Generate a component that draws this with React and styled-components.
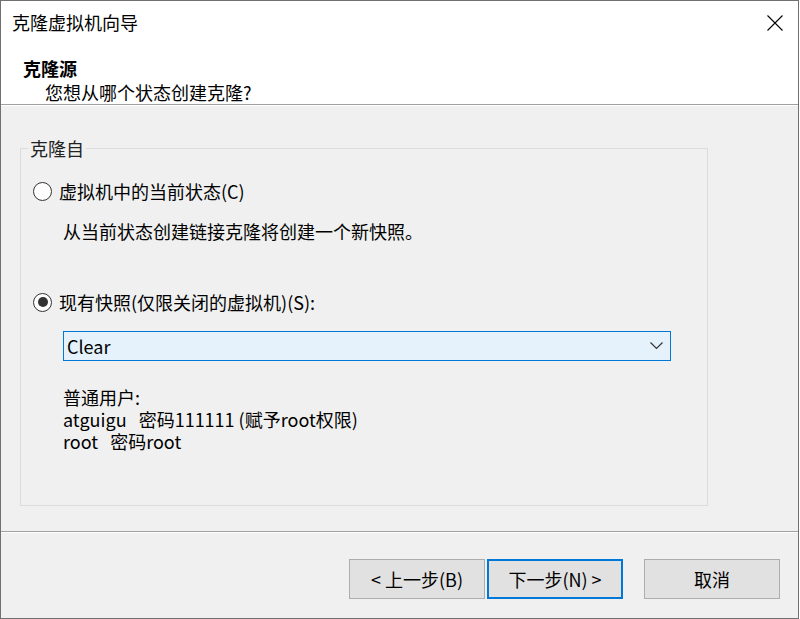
import React from 'react';
import styled, { createGlobalStyle } from 'styled-components';

const GlobalStyle = createGlobalStyle`
  html, body {
    margin: 0;
    padding: 0;
    background: #ffffff;
  }
  body {
    font-family: "Noto Sans CJK SC", "Noto Sans", sans-serif;
    font-size: 18px;
    color: #000;
  }
  * { box-sizing: border-box; }
`;

const Window = styled.div`
  width: 799px;
  height: 619px;
  border: 1px solid #707070;
  display: flex;
  flex-direction: column;
  background: #f0f0f0;
`;

const Top = styled.div`
  background: #fff;
  display: flex;
  flex-direction: column;
`;

const TitleBar = styled.div`
  height: 42px;
  display: flex;
  align-items: center;
  justify-content: space-between;
  padding: 0 15px 0 11px;
`;

const Title = styled.div`
  font-size: 18px;
  line-height: 24px;
`;

const CloseBtn = styled.div`
  width: 16px;
  height: 16px;
  display: flex;
  margin-top: 1px;
`;

const Info = styled.div`
  height: 61px;
  padding: 13px 0 0 22px;
`;

const InfoTitle = styled.div`
  font-weight: bold;
  line-height: 24px;
`;

const InfoSub = styled.div`
  line-height: 24px;
  padding-left: 22px;
`;

const Divider = styled.div`
  height: 2px;
  border-top: 1px solid #a0a0a0;
  border-bottom: 1px solid #ffffff;
`;

const Body = styled.div`
  height: 425px;
  padding: 30px 0 0 19px;
`;

const Group = styled.fieldset`
  margin: 0;
  padding: 0;
  width: 688px;
  height: 370px;
  border: 1px solid #dcdcdc;
`;

const Legend = styled.legend`
  margin-left: 7px;
  padding: 0 2px;
  line-height: 24px;
  color: #222;
`;

const GroupBody = styled.div`
  display: flex;
  flex-direction: column;
  align-items: flex-start;
  padding-left: 12px;
`;

const RadioRow = styled.label`
  display: flex;
  align-items: center;
  height: 24px;
  gap: 7px;
  margin-top: ${p => p.$mt}px;
`;

const RadioCircle = styled.span`
  width: 19px;
  height: 19px;
  border-radius: 50%;
  border: 1px solid #333;
  background: #fff;
  display: flex;
  align-items: center;
  justify-content: center;
  &::after {
    content: '';
    width: 10px;
    height: 10px;
    border-radius: 50%;
    background: ${p => (p.$checked ? '#333' : 'transparent')};
  }
`;

const Indented = styled.div`
  margin-left: 30px;
  margin-top: ${p => p.$mt}px;
  line-height: 24px;
`;

const Select = styled.div`
  margin-left: 30px;
  margin-top: 17px;
  width: 608px;
  height: 30px;
  border: 1px solid #0078d7;
  background: #e5f1fb;
  display: flex;
  align-items: center;
  justify-content: space-between;
  padding: 0 7px 0 3px;
  line-height: 24px;
`;

const Notes = styled.div`
  margin-left: 30px;
  margin-top: 25px;
  line-height: 22px;
  white-space: pre;
`;

const Footer = styled.div`
  flex: 1;
  display: flex;
  justify-content: flex-end;
  align-items: flex-start;
  padding: 26px 18px 0 0;
`;

const Button = styled.div`
  width: 136px;
  height: 40px;
  margin-left: ${p => p.$ml || 0}px;
  background: #e1e1e1;
  border: ${p => (p.$primary ? '2px solid #0078d7' : '1px solid #adadad')};
  display: flex;
  align-items: center;
  justify-content: center;
  font-size: 18px;
`;

function Radio({ checked, mt, children }) {
  return (
    <RadioRow $mt={mt}>
      <RadioCircle $checked={checked} />
      <span>{children}</span>
    </RadioRow>
  );
}

export default function App() {
  return (
    <>
      <GlobalStyle />
      <Window>
        <Top>
          <TitleBar>
            <Title>克隆虚拟机向导</Title>
            <CloseBtn>
              <svg width="16" height="16" viewBox="0 0 16 16">
                <path d="M0.5 0.5 L15.5 15.5 M15.5 0.5 L0.5 15.5" stroke="#000" strokeWidth="1.1" fill="none" />
              </svg>
            </CloseBtn>
          </TitleBar>
          <Info>
            <InfoTitle>克隆源</InfoTitle>
            <InfoSub>您想从哪个状态创建克隆?</InfoSub>
          </Info>
        </Top>
        <Divider />
        <Body>
          <Group>
            <Legend>克隆自</Legend>
            <GroupBody>
              <Radio mt={19}>虚拟机中的当前状态(C)</Radio>
              <Indented $mt={16}>从当前状态创建链接克隆将创建一个新快照。</Indented>
              <Radio mt={47} checked>现有快照(仅限关闭的虚拟机)(S):</Radio>
              <Select>
                <span>Clear</span>
                <svg width="13" height="8" viewBox="0 0 13 8">
                  <path d="M0.5 0.5 L6.5 6.5 L12.5 0.5" stroke="#333" strokeWidth="1.2" fill="none" />
                </svg>
              </Select>
              <Notes>
                <div>普通用户:</div>
                <div>{'atguigu   密码111111 (赋予root权限)'}</div>
                <div>{'root   密码root'}</div>
              </Notes>
            </GroupBody>
          </Group>
        </Body>
        <Divider />
        <Footer>
          <Button>{'< 上一步(B)'}</Button>
          <Button $primary $ml={2}>{'下一步(N) >'}</Button>
          <Button $ml={21}>取消</Button>
        </Footer>
      </Window>
    </>
  );
}
